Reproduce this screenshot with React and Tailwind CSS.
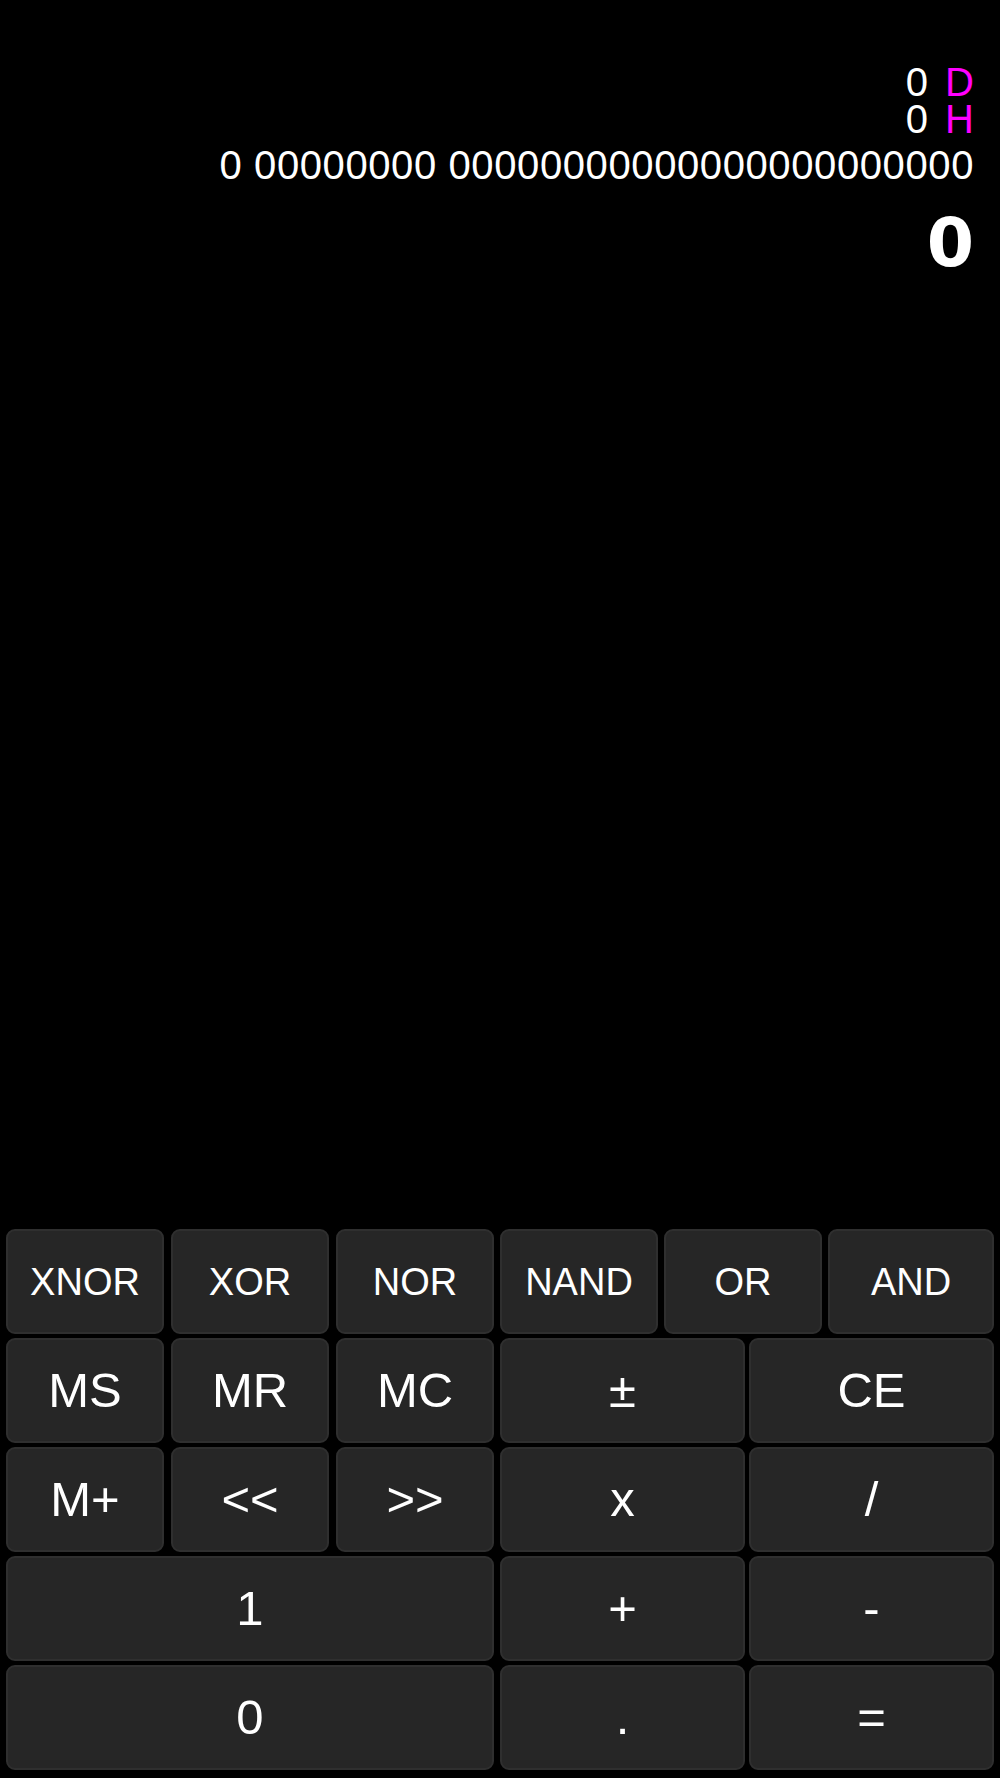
import React from "react";

const font = { fontFamily: '"Liberation Sans", Arial, sans-serif' };

function Key({ label, small }) {
  return (
    <button
      className={
        "flex h-[105px] items-center justify-center rounded-[9px] border-2 border-[#2f2f2f] bg-[#262626] leading-none text-white " +
        (small ? "text-[38px]" : "text-[49px]")
      }
    >
      {label}
    </button>
  );
}

function Row({ left, right, small }) {
  return (
    <div className="flex gap-[6px]">
      <div className="grid w-[488px] grid-cols-3 gap-[7px]">
        {left.map((k) => (
          <Key key={k} label={k} small={small} />
        ))}
      </div>
      <div className={"grid flex-1 " + (right.length === 3 ? "grid-cols-[158px_158px_1fr] gap-[6px]" : "grid-cols-2 gap-[4px]")}>
        {right.map((k) => (
          <Key key={k} label={k} small={small} />
        ))}
      </div>
    </div>
  );
}

function WideRow({ main, right }) {
  return (
    <div className="flex gap-[6px]">
      <div className="grid w-[488px] grid-cols-1">
        <Key label={main} />
      </div>
      <div className="grid flex-1 grid-cols-2 gap-[4px]">
        {right.map((k) => (
          <Key key={k} label={k} />
        ))}
      </div>
    </div>
  );
}

export default function App() {
  return (
    <div className="flex h-[1778px] w-full flex-col bg-black text-white" style={font}>
      {/* display */}
      <div className="flex flex-col items-end pr-[26px] pt-[64px]">
        <div className="text-[40px] leading-[37px]">
          0 <span className="ml-[6px] text-[#ff00ff]">D</span>
        </div>
        <div className="text-[40px] leading-[37px]">
          0 <span className="ml-[6px] text-[#ff00ff]">H</span>
        </div>
        <div className="mt-[7px] whitespace-pre text-[40px] leading-[40px] tracking-[0.6px]">
          0 00000000 00000000000000000000000
        </div>
        <div className="mt-[24px] font-['DejaVu_Sans',sans-serif] text-[68px] font-bold leading-[68px]">0</div>
      </div>

      {/* keypad */}
      <div className="mt-auto flex flex-col gap-[4px] px-[6px] pb-[8px]">
        <Row left={["XNOR", "XOR", "NOR"]} right={["NAND", "OR", "AND"]} small />
        <Row left={["MS", "MR", "MC"]} right={["±", "CE"]} />
        <Row left={["M+", "<<", ">>"]} right={["x", "/"]} />
        <WideRow main="1" right={["+", "-"]} />
        <WideRow main="0" right={[".", "="]} />
      </div>
    </div>
  );
}
